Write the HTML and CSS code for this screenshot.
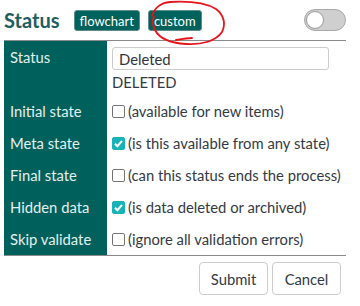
FILE: index.html
```html
<!DOCTYPE html>
<html lang="en">
<head>
  <meta charset="UTF-8">
  <title>Status</title>
  <link rel="stylesheet" href="styles.css">
</head>
<body>

<div class="status-box">
  <div class="head">
    <h2>Status</h2>
    <span class="tag">flowchart</span>
    <span class="tag">custom</span>
    <span class="switch"><span class="knob"></span></span>

    <!-- red hand-drawn mark -->
    <svg class="scribble" width="90" height="50" viewBox="0 0 90 50">
      <path d="M6 16 C 8 9, 14 3, 24 2 C 42 1, 60 3, 70 9 C 78 15, 80 24, 76 32 C 70 41, 56 45, 40 44 C 24 43, 13 38, 9 30 C 6 24, 6 20, 8 17 M30 40 C 36 39, 42 38, 46 38"
            fill="none" stroke="#e8141b" stroke-width="1.8" stroke-linecap="round"/>
    </svg>
  </div>

  <table class="form">
    <tr class="first">
      <th>Status</th>
      <td>
        <input type="text" class="name" value="Deleted">
        <div class="code">DELETED</div>
      </td>
    </tr>
    <tr>
      <th>Initial state</th>
      <td><label><span class="box"></span>(available for new items)</label></td>
    </tr>
    <tr>
      <th>Meta state</th>
      <td><label><span class="box on"><svg width="13" height="13" viewBox="0 0 13 13"><path d="M3 6.8 L5.4 9.2 L10 3.8" fill="none" stroke="#fff" stroke-width="2"/></svg></span>(is this available from any state)</label></td>
    </tr>
    <tr>
      <th>Final state</th>
      <td><label><span class="box"></span>(can this status ends the process)</label></td>
    </tr>
    <tr>
      <th>Hidden data</th>
      <td><label><span class="box on"><svg width="13" height="13" viewBox="0 0 13 13"><path d="M3 6.8 L5.4 9.2 L10 3.8" fill="none" stroke="#fff" stroke-width="2"/></svg></span>(is data deleted or archived)</label></td>
    </tr>
    <tr>
      <th>Skip validate</th>
      <td><label><span class="box"></span>(ignore all validation errors)</label></td>
    </tr>
  </table>

  <div class="actions">
    <button class="btn">Submit</button>
    <button class="btn">Cancel</button>
  </div>
</div>

</body>
</html>
```

FILE: styles.css
```css
body {
  margin: 0;
  font-family: 'Lato', sans-serif;
  font-size: 14.8px;
  color: #333a44;
  background: #fff;
}

.status-box {
  width: 342px;
  padding: 0 4px;
}

.head {
  position: relative;
  display: flex;
  align-items: center;
  height: 40px;
  border-bottom: 1px solid #8a8a8a;
}

.head h2 {
  margin: 0 14px 0 0;
  font-size: 20px;
  font-weight: bold;
  color: #1d5e60;
  line-height: 1;
}

.tag {
  display: inline-block;
  height: 21px;
  line-height: 20px;
  padding: 0 5px;
  margin-right: 8px;
  box-sizing: border-box;
  background: #00625c;
  border: 1px solid #5e8d8a;
  border-radius: 3px;
  color: #fff;
  font-size: 13px;
}

.switch {
  margin-left: auto;
  width: 42px;
  height: 22px;
  box-sizing: border-box;
  background: #cfcfcf;
  border: 1px solid #a8a8a8;
  border-radius: 11px;
  padding: 1px;
}

.knob {
  display: block;
  width: 18px;
  height: 18px;
  box-sizing: border-box;
  border-radius: 50%;
  background: #fff;
  border: 1px solid #9a9a9a;
}

.scribble {
  position: absolute;
  left: 142px;
  top: 0;
}

.form {
  width: 100%;
  border-collapse: collapse;
  border-bottom: 1px solid #8a8a8a;
}

.form th {
  width: 97px;
  padding: 0 0 0 6px;
  background: #00615c;
  color: #e4efee;
  font-weight: normal;
  text-align: left;
  height: 32px;
  vertical-align: middle;
}

.form td {
  padding: 0 0 0 5px;
  height: 32px;
}

.form tr.first th {
  vertical-align: top;
  padding-top: 7px;
  height: 47px;
}

.form tr.first td {
  vertical-align: top;
  padding-top: 6px;
}

.name {
  display: block;
  width: 217px;
  height: 23px;
  box-sizing: border-box;
  padding: 0 6px;
  border: 1px solid #cccccc;
  border-radius: 3px;
  font-family: inherit;
  font-size: 14.8px;
  color: #2f3440;
}

.code {
  margin-top: 3px;
  line-height: 18px;
}

label {
  display: flex;
  align-items: center;
}

.box {
  display: inline-block;
  width: 13px;
  height: 13px;
  box-sizing: border-box;
  margin-right: 3px;
  border: 1px solid #767676;
  border-radius: 2px;
  background: #fff;
}

.box.on {
  border-color: #19b2b6;
  background: #19b2b6;
}

.box svg {
  display: block;
  margin: -1px;
}

.actions {
  display: flex;
  justify-content: flex-end;
  gap: 4px;
  padding: 6px 5px 0 0;
}

.btn {
  width: 69px;
  height: 33px;
  background: #fff;
  border: 1px solid #cccccc;
  border-radius: 4px;
  font-family: inherit;
  font-size: 14.8px;
  color: #333a44;
  cursor: pointer;
}
```
